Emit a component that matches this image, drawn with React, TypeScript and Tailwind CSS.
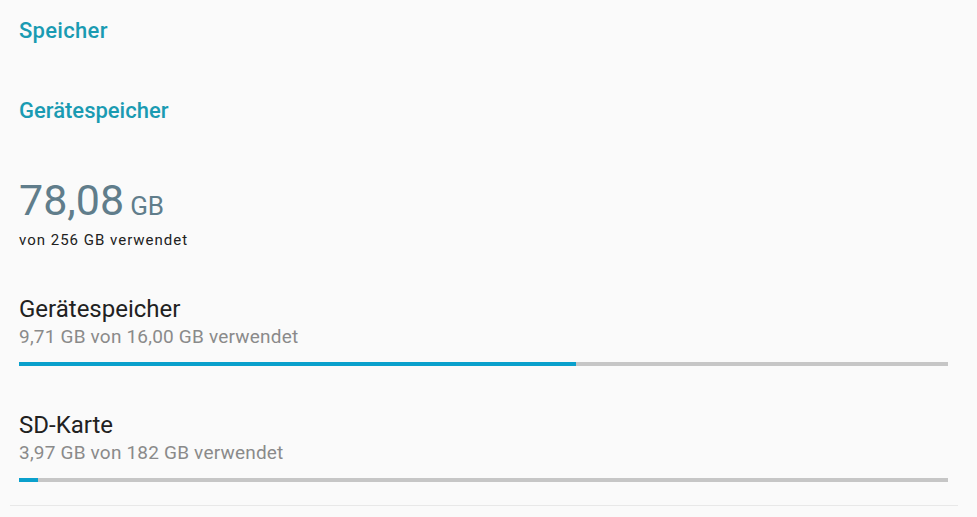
const volumes = [
  { name: "Gerätespeicher", used: "9,71 GB von 16,00 GB verwendet", pct: 60.0 },
  { name: "SD-Karte", used: "3,97 GB von 182 GB verwendet", pct: 2.0 },
];

function UsageBar({ pct }: { pct: number }) {
  return (
    <div className="h-[4px] w-full bg-[#c6c6c6]">
      <div className="h-full bg-[#0aa0cc]" style={{ width: `${pct}%` }} />
    </div>
  );
}

export default function App() {
  return (
    <div
      className="h-[517px] w-[977px] overflow-hidden bg-[#fafafa]"
      style={{ fontFamily: "Roboto, 'Noto Sans', sans-serif" }}
    >
      <div className="pl-[19px] pr-[29px]">
        <h1 className="pt-[17px] text-[22px] font-medium leading-[28px] tracking-[0.3px] text-[#1a9bb2]">
          Speicher
        </h1>
        <h2 className="mt-[52px] text-[22px] font-medium leading-[28px] text-[#1a9bb2]">
          Gerätespeicher
        </h2>

        <div className="mt-[50px] flex items-baseline gap-[6px] text-[#607d8b]">
          <span className="text-[43px] leading-[50px]">78,08</span>
          <span className="text-[26px] leading-[28px]">GB</span>
        </div>
        <p className="mt-[6px] text-[15px] leading-[18px] tracking-[1px] text-[#212121]">
          von 256 GB verwendet
        </p>

        <ul className="mt-[45px] flex flex-col gap-[44px]">
          {volumes.map((v) => (
            <li key={v.name}>
              <p className="text-[24px] leading-[30px] text-[#212121]">{v.name}</p>
              <p className="mt-[1px] text-[19px] leading-[24px] tracking-[0.2px] text-[#8a8a8a]">
                {v.used}
              </p>
              <div className="mt-[13px]">
                <UsageBar pct={v.pct} />
              </div>
            </li>
          ))}
        </ul>
      </div>
      <div className="ml-[10px] mr-[19px] mt-[23px] h-px bg-[#e8e8e8]" />
    </div>
  );
}
